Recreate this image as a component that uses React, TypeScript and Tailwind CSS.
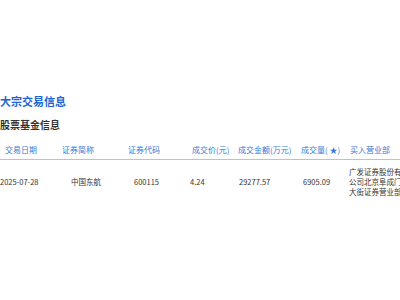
const cols = [
  { w: 'w-[55px]', head: '交易日期', hp: 'pl-[5px]', val: '2025-07-28', vp: 'pl-0' },
  { w: 'w-[65px]', head: '证券简称', hp: 'pl-[7px]', val: '中国东航', vp: 'pl-[16px]' },
  { w: 'w-[65px]', head: '证券代码', hp: 'pl-[8px]', val: '600115', vp: 'pl-[14px]' },
  { w: 'w-[50px]', head: '成交价(元)', hp: 'pl-[7px]', val: '4.24', vp: 'pl-[5px]' },
  { w: 'w-[62px]', head: '成交金额(万元)', hp: 'pl-[3px]', val: '29277.57', vp: 'pl-[4px]' },
  { w: 'w-[48px]', head: '成交量( ★)', hp: 'pl-[4px]', val: '6905.09', vp: 'pl-[6px]' },
];

export default function App() {
  return (
    <div
      className="w-[400px] h-[300px] overflow-hidden bg-white pt-[94px]"
      style={{ fontFamily: '"Noto Sans CJK SC", "Noto Sans", sans-serif' }}
    >
      <h1 className="text-[11px] leading-[14px] font-bold text-[#1c64d0]">大宗交易信息</h1>
      <h2 className="mt-[10px] text-[10px] leading-[14px] font-bold text-[#333]">股票基金信息</h2>

      <div className="mt-[9px] w-[420px]">
        {/* header */}
        <div className="flex h-[19px] items-center border-b border-[#a9c5ee] text-[8px] leading-[10px] text-[#3a78d6] whitespace-nowrap">
          {cols.map((c) => (
            <div key={c.head} className={`${c.w} ${c.hp} shrink-0`}>
              {c.head}
            </div>
          ))}
          <div className="w-[60px] pl-[5px] shrink-0">买入营业部</div>
        </div>

        {/* row */}
        <div className="flex h-[44px] items-center text-[7.5px] leading-[10px] text-[#333]">
          {cols.map((c) => (
            <div key={c.head} className={`${c.w} ${c.vp} shrink-0 whitespace-nowrap`}>
              {c.val}
            </div>
          ))}
          <div className="w-[60px] pl-[4px] shrink-0">
            <div>广发证券股份有</div>
            <div>公司北京阜成门</div>
            <div>大街证券营业部</div>
          </div>
        </div>
      </div>
    </div>
  );
}
